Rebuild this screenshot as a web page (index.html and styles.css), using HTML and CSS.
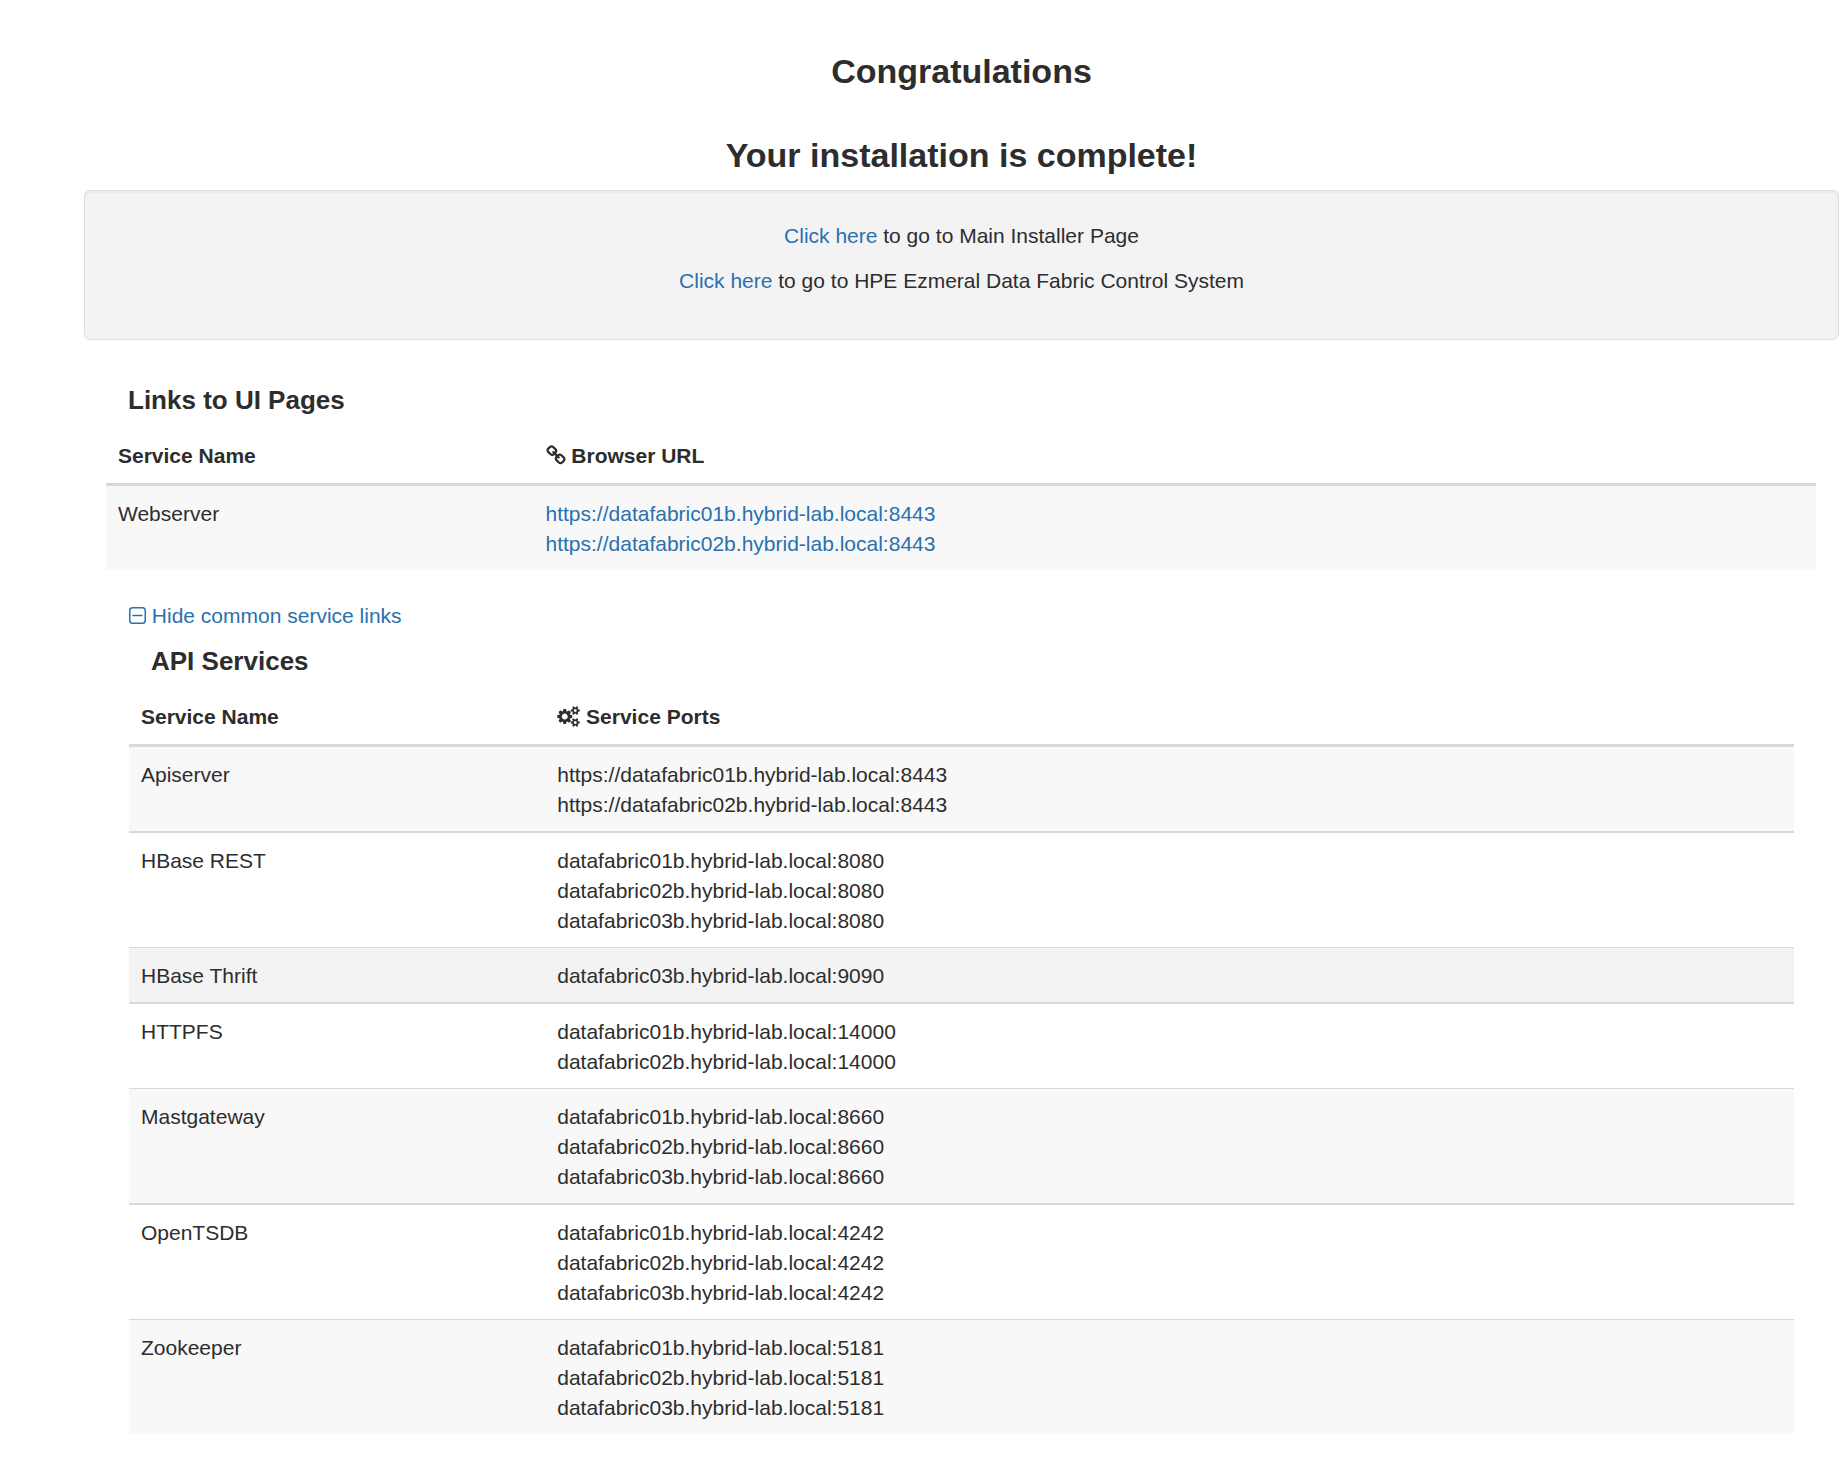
FILE: index.html
```html
<!DOCTYPE html>
<html lang="en">
<head>
<meta charset="utf-8">
<title>Installation complete</title>
<link rel="stylesheet" href="styles.css">
</head>
<body>
<main class="page">
  <header class="intro">
    <h1>Congratulations</h1>
    <h2>Your installation is complete!</h2>
  </header>

  <section class="well">
    <p><a href="#installer">Click here</a> to go to Main Installer Page</p>
    <p><a href="#control-system">Click here</a> to go to HPE Ezmeral Data Fabric Control System</p>
  </section>

  <section class="links">
    <h3 class="section-title">Links to UI Pages</h3>
    <table class="services">
      <thead>
        <tr>
          <th class="name" scope="col">Service Name</th>
          <th scope="col"><svg class="icon icon-link" viewBox="64 0 1664 1792" aria-hidden="true"><path d="M1520 1216q0-40-28-68l-208-208q-28-28-68-28-42 0-72 32 3 3 19 18.5t21.5 21.5 15 19 13 25.5 3.5 27.5q0 40-28 68t-68 28q-15 0-27.5-3.5t-25.5-13-19-15-21.5-21.5-18.5-19q-33 31-33 73 0 40 28 68l206 207q27 27 68 27 40 0 68-26l147-146q28-28 28-67zm-703-705q0-40-28-68l-206-207q-28-28-68-28-39 0-68 27l-147 146q-28 28-28 67 0 40 28 68l208 208q27 27 68 27 42 0 72-31-3-3-19-18.5t-21.5-21.5-15-19-13-25.5-3.5-27.5q0-40 28-68t68-28q15 0 27.5 3.5t25.5 13 19 15 21.5 21.5 18.5 19q33-31 33-73zm895 705q0 120-85 203l-147 146q-83 83-203 83-121 0-204-85l-206-207q-83-83-83-203 0-123 88-209l-88-88q-86 88-208 88-120 0-204-84l-208-208q-84-84-84-204t85-203l147-146q83-83 203-83 121 0 204 85l206 207q83 83 83 203 0 123-88 209l88 88q86-88 208-88 120 0 204 84l208 208q84 84 84 204z"/></svg> Browser URL</th>
        </tr>
      </thead>
      <tbody>
        <tr>
          <td>Webserver</td>
          <td><a href="https://datafabric01b.hybrid-lab.local:8443">https://datafabric01b.hybrid-lab.local:8443</a><br><a href="https://datafabric02b.hybrid-lab.local:8443">https://datafabric02b.hybrid-lab.local:8443</a></td>
        </tr>
      </tbody>
    </table>

    <div class="common">
      <a class="toggle" href="#api-services"><svg class="icon icon-minus" viewBox="0 0 17 17" aria-hidden="true"><rect x="0.75" y="0.75" width="15.5" height="15.5" rx="2.8"/><path d="M3.4 8.5h10.2"/></svg> Hide common service links</a>

      <h3 class="section-title" id="api-services">API Services</h3>
      <table class="services">
        <thead>
          <tr>
            <th class="name" scope="col">Service Name</th>
            <th scope="col"><svg class="icon icon-cogs" viewBox="0 0 1920 1792" aria-hidden="true"><path d="M896 896q0-106-75-181t-181-75-181 75-75 181 75 181 181 75 181-75 75-181zm768 512q0-52-38-90t-90-38-90 38-38 90q0 53 37.5 90.5t90.5 37.5 90.5-37.5 37.5-90.5zm0-1024q0-52-38-90t-90-38-90 38-38 90q0 53 37.5 90.5t90.5 37.5 90.5-37.5 37.5-90.5zm-384 421v185q0 10-7 19.5t-16 10.5l-155 24q-11 35-32 76 34 48 90 115 7 11 7 20 0 12-7 19-23 30-82.5 89.5t-78.5 59.5q-11 0-21-7l-115-90q-37 19-77 31-11 108-23 155-7 24-30 24h-186q-11 0-20-7.5t-10-17.5l-23-153q-34-10-75-31l-118 89q-7 7-20 7-11 0-21-8-144-133-144-160 0-9 7-19 10-14 41-53t47-61q-23-44-35-82l-152-24q-10-1-17-9.5t-7-19.5v-185q0-10 7-19.5t16-10.5l155-24q11-35 32-76-34-48-90-115-7-11-7-20 0-12 7-20 22-30 82-89t79-59q11 0 21 7l115 90q34-18 77-32 11-108 23-154 7-24 30-24h186q11 0 20 7.5t10 17.5l23 153q34 10 75 31l118-89q8-7 20-7 11 0 21 8 144 133 144 160 0 8-7 19-12 16-42 54t-45 60q23 48 34 82l152 23q10 2 17 10.5t7 19.5zm640 533v140q0 16-149 31-12 27-30 52 51 113 51 138 0 4-4 7-122 71-124 71-8 0-46-47t-52-68q-20 2-30 2t-30-2q-14 21-52 68t-46 47q-2 0-124-71-4-3-4-7 0-25 51-138-18-25-30-52-149-15-149-31v-140q0-16 149-31 13-29 30-52-51-113-51-138 0-4 4-7 4-2 35-20t59-34 30-16q8 0 46 46.5t52 67.5q20-2 30-2t30 2q51-71 92-112l6-2q4 0 124 70 4 3 4 7 0 25-51 138 17 23 30 52 149 15 149 31zm0-1024v140q0 16-149 31-12 27-30 52 51 113 51 138 0 4-4 7-122 71-124 71-8 0-46-47t-52-68q-20 2-30 2t-30-2q-14 21-52 68t-46 47q-2 0-124-71-4-3-4-7 0-25 51-138-18-25-30-52-149-15-149-31v-140q0-16 149-31 13-29 30-52-51-113-51-138 0-4 4-7 4-2 35-20t59-34 30-16q8 0 46 46.5t52 67.5q20-2 30-2t30 2q51-71 92-112l6-2q4 0 124 70 4 3 4 7 0 25-51 138 17 23 30 52 149 15 149 31z"/></svg> Service Ports</th>
          </tr>
        </thead>
        <tbody>
          <tr>
            <td>Apiserver</td>
            <td>https://datafabric01b.hybrid-lab.local:8443<br>https://datafabric02b.hybrid-lab.local:8443</td>
          </tr>
          <tr>
            <td>HBase REST</td>
            <td>datafabric01b.hybrid-lab.local:8080<br>datafabric02b.hybrid-lab.local:8080<br>datafabric03b.hybrid-lab.local:8080</td>
          </tr>
          <tr class="active">
            <td>HBase Thrift</td>
            <td>datafabric03b.hybrid-lab.local:9090</td>
          </tr>
          <tr>
            <td>HTTPFS</td>
            <td>datafabric01b.hybrid-lab.local:14000<br>datafabric02b.hybrid-lab.local:14000</td>
          </tr>
          <tr>
            <td>Mastgateway</td>
            <td>datafabric01b.hybrid-lab.local:8660<br>datafabric02b.hybrid-lab.local:8660<br>datafabric03b.hybrid-lab.local:8660</td>
          </tr>
          <tr>
            <td>OpenTSDB</td>
            <td>datafabric01b.hybrid-lab.local:4242<br>datafabric02b.hybrid-lab.local:4242<br>datafabric03b.hybrid-lab.local:4242</td>
          </tr>
          <tr>
            <td>Zookeeper</td>
            <td>datafabric01b.hybrid-lab.local:5181<br>datafabric02b.hybrid-lab.local:5181<br>datafabric03b.hybrid-lab.local:5181</td>
          </tr>
        </tbody>
      </table>
    </div>
  </section>
</main>
</body>
</html>
```
FILE: styles.css
```css
* {
  box-sizing: border-box;
}

body {
  margin: 0;
  background: #fff;
  color: #2d2d2d;
  font-family: "Helvetica Neue", "Liberation Sans", Arial, sans-serif;
  font-size: 21px;
  line-height: 30px;
}

a {
  color: #2a70ae;
  text-decoration: none;
}

a:hover {
  text-decoration: underline;
}

.page {
  padding: 51px 3px 30px 84px;
}

.intro {
  text-align: center;
}

.intro h1,
.intro h2 {
  margin: 0 0 44px;
  font-size: 34px;
  line-height: 40px;
}

.intro h2 {
  margin-bottom: 15px;
}

.well {
  padding: 30px 30px 28px;
  border: 1px solid #dedede;
  border-radius: 6px;
  background: #f3f3f3;
  box-shadow: inset 0 2px 2px rgba(0, 0, 0, 0.04);
  text-align: center;
}

.well p {
  margin: 0 0 15px;
}

.links {
  padding: 46px 23px 0 22px;
}

.section-title {
  margin: 0 0 15px;
  padding-left: 22px;
  font-size: 26px;
  line-height: 28px;
}

.services {
  width: 100%;
  border-spacing: 0;
  table-layout: fixed;
}

.services th,
.services td {
  padding: 12px;
  text-align: left;
  vertical-align: top;
}

.services td {
  padding: 13px 12px 11px;
}

.services th {
  border-bottom: 3px solid #d8d8d8;
}

.services .name {
  width: 25%;
}

.services tbody tr:nth-child(odd) {
  background: #f8f8f8;
}

.services tbody tr.active {
  background: #f3f3f3;
}

.services tr:nth-child(even) td {
  border-top: 2px solid #d8d8d8;
}

.services tr:nth-child(odd) td {
  border-top: 1px solid #d8d8d8;
}

.services tr:first-child td {
  border-top: 0;
}

.common {
  padding: 31px 22px 0 23px;
}

.toggle {
  display: block;
  margin-bottom: 16px;
}

.icon {
  height: 21px;
  fill: currentColor;
  vertical-align: -3px;
}

.icon-link {
  width: 20px;
}

.icon-cogs {
  width: 23px;
}

.icon-minus {
  width: 17px;
  height: 17px;
  fill: none;
  stroke: currentColor;
  stroke-width: 1.5;
  vertical-align: -1px;
}
```
